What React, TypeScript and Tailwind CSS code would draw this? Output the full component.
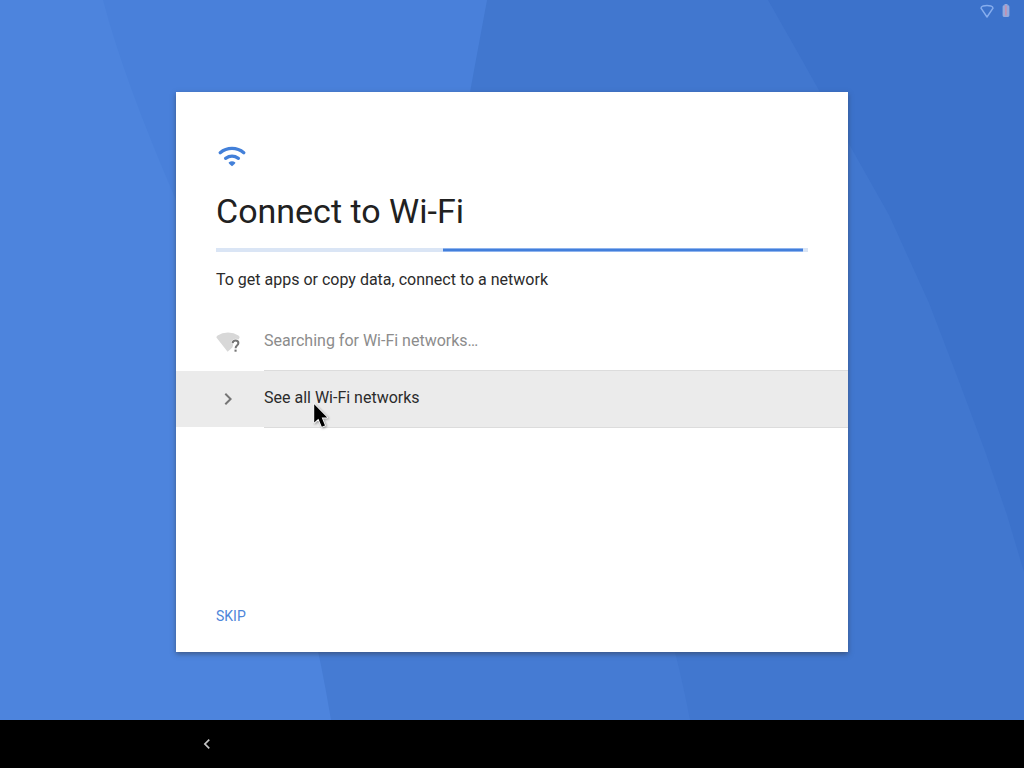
import { MdChevronLeft, MdChevronRight } from "react-icons/md";

function Backdrop() {
  return (
    <svg
      className="absolute inset-0 h-full w-full"
      viewBox="0 0 1024 720"
      preserveAspectRatio="none"
      aria-hidden="true"
    >
      <rect width="1024" height="720" fill="#4d84dd" />
      <path d="M103 0 Q124 80 176 200 L320 652 L500 652 L500 0Z" fill="#4980da" />
      <path d="M260 450 Q308 580 331 720 H1024 V450Z" fill="#457bd3" />
      <path d="M487 0 L470 92 Q480 400 675 652 Q684 688 690 720 H1024 V0Z" fill="#4177cf" />
      <path d="M768 0 L802 60 L858 160 L889 215 L929 303 L957 376 L985 451 L1007 515 L1024 572 V0Z" fill="#3c72cb" />
    </svg>
  );
}

function StatusBar() {
  return (
    <header className="relative flex h-6 items-start justify-end gap-2 px-[14px] pt-1">
      <svg width="14" height="14" viewBox="0 0 14 14" role="img" aria-label="Wi-Fi disconnected">
        <path
          d="M7 13 L1 4.2 Q1 2.6 3.2 1.9 Q7 .9 10.8 1.9 Q13 2.6 13 4.2Z"
          fill="none"
          stroke="#86adee"
          strokeWidth="1.5"
          strokeLinejoin="round"
        />
      </svg>
      <svg width="8" height="14" viewBox="0 0 8 14" role="img" aria-label="Battery">
        <path d="M2.5 0h3v1.3H6q1.4 0 1.4 1.4v8.9Q7.4 13 6 13H2Q.6 13 .6 11.6V2.7Q.6 1.3 2 1.3h.5z" fill="#93a9dc" />
        <path d="M3 1.5h1.8v10H3z" fill="#c092b4" />
      </svg>
    </header>
  );
}

function WifiIcon() {
  return (
    <svg className="size-8" viewBox="0 0 32 32" fill="none" stroke="#4380d9" aria-hidden="true">
      <path d="M4.2 12.7 A18.5 18.5 0 0 1 27.8 12.7" strokeWidth="3.3" strokeLinecap="round" />
      <path d="M9.6 18.3 A11.5 11.5 0 0 1 22.4 18.3" strokeWidth="3.3" strokeLinecap="round" />
      <path d="M12.6 22.6 Q16 19.8 19.4 22.6 Q19.4 23.8 16 26.2 Q12.6 23.8 12.6 22.6Z" fill="#4380d9" stroke="none" />
    </svg>
  );
}

function UnknownWifiIcon() {
  return (
    <svg className="size-6" viewBox="0 0 24 24" fill="none" aria-hidden="true">
      <path
        d="M11.6 21.8 L.4 7.4 Q.3 6.2 1.6 5.4 Q6 2.5 12 2.5 T22.4 5.4 Q23.7 6.2 23.6 7.4 L22.6 9.6 Q19.4 7.8 16.6 10 Q15.2 11.4 15 13.3 H17 V15.6 L16.4 17.4Z"
        fill="#d8d8d8"
      />
      <path
        d="M16.6 13.1 Q16.8 10.5 19.5 10.5 Q22.4 10.5 22.4 13.1 Q22.4 14.4 21 15.5 Q19.6 16.6 19.6 18.2"
        stroke="#757575"
        strokeWidth="2"
      />
      <rect x="18.5" y="19.6" width="2.1" height="2.1" fill="#757575" />
    </svg>
  );
}

function Pointer() {
  return (
    <svg
      className="pointer-events-none absolute top-8 left-[137px] h-7 w-5"
      viewBox="0 0 20 28"
      aria-hidden="true"
    >
      <path
        d="M1.2 1.2 V19.6 L5.4 15.8 L8.8 23.8 L12 22.4 L8.7 14.6 H14.2Z"
        fill="#000"
        stroke="#fff"
        strokeWidth="1.6"
        strokeLinejoin="round"
        paintOrder="stroke"
        className="drop-shadow-[1px_1px_1px_rgba(0,0,0,0.35)]"
      />
    </svg>
  );
}

export default function App() {
  return (
    <div className="flex min-h-screen flex-col bg-black font-[Roboto,sans-serif] text-[#2b2b2b]">
      <div className="relative flex flex-1 flex-col">
        <Backdrop />
        <StatusBar />
        <main className="relative flex flex-1 items-center justify-center">
          <section className="flex min-h-[560px] w-full max-w-2xl flex-col bg-white pt-12 pb-[26px] shadow-[0_2px_5px_rgba(50,60,80,0.6)]">
            <div className="px-10">
              <WifiIcon />
              <h1 className="mt-[19px] text-[34px] leading-10 text-[#212121]">Connect to Wi-Fi</h1>
              <div
                className="mt-[17px] flex h-1 bg-[#dae5f5]"
                role="progressbar"
                aria-label="Searching for networks"
              >
                <div className="ml-[38.3%] w-[60.9%] border-y border-[#8fb4ee] bg-[#437fdb]" />
              </div>
              <p className="mt-4 text-base leading-6">To get apps or copy data, connect to a network</p>
            </div>
            <ul className="mt-[22px] text-base leading-6">
              <li>
                <div className="flex h-14 items-center gap-6 px-10 text-[#8c8c8c]">
                  <UnknownWifiIcon />
                  <span className="pb-0.5">Searching for Wi-Fi networks…</span>
                </div>
                <div className="ml-[88px] h-px bg-[#dcdcdc]" />
              </li>
              <li>
                <button type="button" className="relative flex h-14 w-full items-center gap-6 bg-[#ebebeb] px-10 text-left">
                  <MdChevronRight className="size-6 text-[#757575]" aria-hidden="true" />
                  <span className="pb-0.5">See all Wi-Fi networks</span>
                  <Pointer />
                </button>
                <div className="ml-[88px] h-px bg-[#dcdcdc]" />
              </li>
            </ul>
            <div className="mt-auto px-10">
              <button type="button" className="block text-sm leading-5 text-[#4d85d9]">
                SKIP
              </button>
            </div>
          </section>
        </main>
      </div>
      <nav className="flex h-12 items-center bg-black px-[197px]">
        <button type="button" aria-label="Back">
          <MdChevronLeft className="size-5 text-[#c4c4c4]" />
        </button>
      </nav>
    </div>
  );
}
